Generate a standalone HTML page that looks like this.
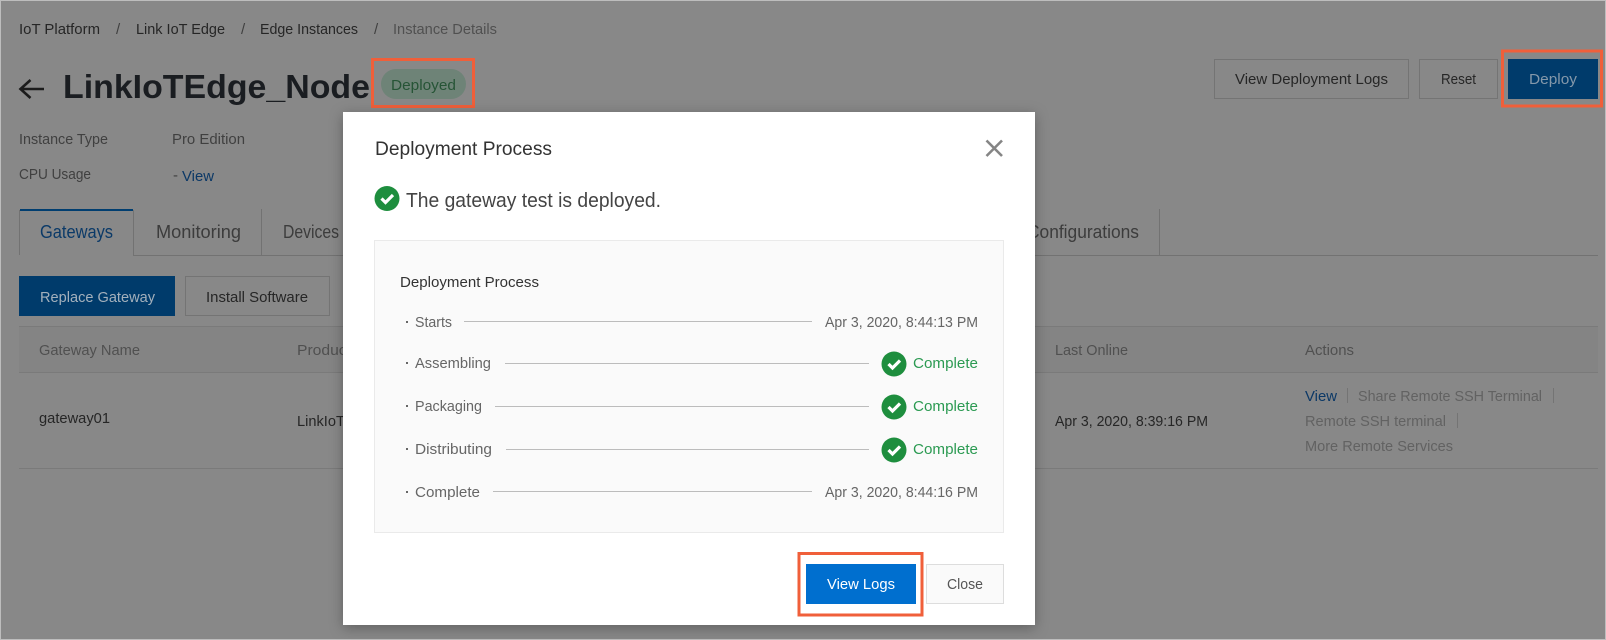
<!DOCTYPE html>
<html><head><meta charset="utf-8"><title>Deployment Process</title>
<style>
html,body{margin:0;padding:0;background:#888;width:1606px;height:640px;overflow:hidden}
svg{display:block}
text{font-family:"Liberation Sans",sans-serif;font-size:15px;white-space:pre}
.d{fill:#262626}.m{fill:#404040}.g{fill:#666}
.h{fill:#505050}.w{fill:#626262}
</style></head><body>
<svg xmlns="http://www.w3.org/2000/svg" width="1606" height="640" viewBox="0 0 1606 640">
<defs><filter id="s" x="-10%" y="-10%" width="120%" height="120%"><feDropShadow dx="0" dy="3" stdDeviation="7" flood-color="#000" flood-opacity=".3"/></filter></defs>
<rect width="1606" height="640" fill="#888"/>
<rect x=".5" y=".5" width="1605" height="639" fill="none" stroke="#bdbdbd"/>
<!-- breadcrumb -->
<text x="19" y="34" class="d" textLength="81" lengthAdjust="spacingAndGlyphs">IoT Platform</text>
<text x="116" y="34" class="m">/</text>
<text x="136" y="34" class="d" textLength="89" lengthAdjust="spacingAndGlyphs">Link IoT Edge</text>
<text x="241" y="34" class="m">/</text>
<text x="260" y="34" class="d" textLength="98" lengthAdjust="spacingAndGlyphs">Edge Instances</text>
<text x="374" y="34" class="m">/</text>
<text x="393" y="34" class="h" textLength="104" lengthAdjust="spacingAndGlyphs">Instance Details</text>
<!-- title -->
<path d="M44 89H21M30.500 80L20.500 89L30.500 98" fill="none" stroke="#1c1c1c" stroke-width="2.600"/>
<text x="63" y="98" style="font-size:33px;font-weight:bold;fill:#1a1d21" textLength="307" lengthAdjust="spacingAndGlyphs">LinkIoTEdge_Node</text>
<rect x="381" y="69" width="85" height="30" rx="15" fill="#6e8377"/>
<text x="391" y="90" style="fill:#265436" textLength="65" lengthAdjust="spacingAndGlyphs">Deployed</text>
<rect x="372.500" y="59.500" width="101" height="47" fill="none" stroke="#f05f3a" stroke-width="3"/>
<!-- meta -->
<text x="19" y="144" class="m" textLength="89" lengthAdjust="spacingAndGlyphs">Instance Type</text>
<text x="172" y="144" class="m" textLength="73" lengthAdjust="spacingAndGlyphs">Pro Edition</text>
<text x="19" y="179" class="m" textLength="72" lengthAdjust="spacingAndGlyphs">CPU Usage</text>
<text x="173" y="180" class="m">-</text>
<text x="182" y="181" style="fill:#0b3866" textLength="32" lengthAdjust="spacingAndGlyphs">View</text>
<!-- tabs -->
<path d="M133 255.500H1598" stroke="#727272" fill="none"/>
<path d="M19.500 255V210M133.500 255V210M261.500 255V209M1159.500 255V209" stroke="#727272" fill="none"/>
<rect x="20" y="209" width="113" height="2" fill="#003e70"/>
<text x="40" y="238" style="font-size:18px;fill:#0b3a68" textLength="73" lengthAdjust="spacingAndGlyphs">Gateways</text>
<text x="156" y="238" style="font-size:18px;fill:#3c3c3c" textLength="85" lengthAdjust="spacingAndGlyphs">Monitoring</text>
<text x="283" y="238" style="font-size:18px;fill:#3c3c3c" textLength="56" lengthAdjust="spacingAndGlyphs">Devices</text>
<text x="1027" y="238" style="font-size:18px;fill:#3c3c3c" textLength="112" lengthAdjust="spacingAndGlyphs">Configurations</text>
<!-- buttons -->
<rect x="19" y="276" width="156" height="40" fill="#003b6b"/>
<text x="40" y="302" style="fill:#a3b0bc" textLength="115" lengthAdjust="spacingAndGlyphs">Replace Gateway</text>
<rect x="185.500" y="276.500" width="144" height="39" fill="none" stroke="#747474"/>
<text x="206" y="302" class="d" textLength="102" lengthAdjust="spacingAndGlyphs">Install Software</text>
<rect x="1214.500" y="59.500" width="194" height="39" fill="none" stroke="#747474"/>
<text x="1235" y="84" class="d" textLength="153" lengthAdjust="spacingAndGlyphs">View Deployment Logs</text>
<rect x="1419.500" y="59.500" width="78" height="39" fill="none" stroke="#747474"/>
<text x="1441" y="84" class="d" textLength="35" lengthAdjust="spacingAndGlyphs">Reset</text>
<rect x="1508" y="59" width="90" height="40" fill="#003b6b"/>
<text x="1529" y="84" style="fill:#8498aa" textLength="48" lengthAdjust="spacingAndGlyphs">Deploy</text>
<rect x="1502.500" y="51" width="99" height="55" fill="none" stroke="#f05f3a" stroke-width="3"/>
<!-- table -->
<rect x="19" y="326" width="1579" height="46" fill="#848484"/>
<path d="M19 326.500H1598M19 372.500H1598M19 468.500H1598" stroke="#7a7a7a" fill="none"/>
<text x="39" y="355" class="h" textLength="101" lengthAdjust="spacingAndGlyphs">Gateway Name</text>
<text x="297" y="355" class="h" textLength="54" lengthAdjust="spacingAndGlyphs">Product</text>
<text x="1055" y="355" class="h" textLength="73" lengthAdjust="spacingAndGlyphs">Last Online</text>
<text x="1305" y="355" class="h" textLength="49" lengthAdjust="spacingAndGlyphs">Actions</text>
<text x="39" y="423" class="d" textLength="71" lengthAdjust="spacingAndGlyphs">gateway01</text>
<text x="297" y="426" class="d" textLength="82" lengthAdjust="spacingAndGlyphs">LinkIoTEdge</text>
<text x="1055" y="426" class="d" textLength="153" lengthAdjust="spacingAndGlyphs">Apr 3, 2020, 8:39:16 PM</text>
<text x="1305" y="401" style="fill:#0b3866" textLength="32" lengthAdjust="spacingAndGlyphs">View</text>
<text x="1358" y="401" class="w" textLength="184" lengthAdjust="spacingAndGlyphs">Share Remote SSH Terminal</text>
<text x="1305" y="426" class="w" textLength="141" lengthAdjust="spacingAndGlyphs">Remote SSH terminal</text>
<text x="1305" y="451" class="w" textLength="148" lengthAdjust="spacingAndGlyphs">More Remote Services</text>
<path d="M1347.500 388V403M1553.500 388V403M1457.500 413V428" stroke="#747474" fill="none"/>
<!-- modal -->
<rect x="343" y="112" width="692" height="513" fill="#fff" filter="url(#s)"/>
<text x="375" y="155" style="font-size:19px;fill:#333" textLength="177" lengthAdjust="spacingAndGlyphs">Deployment Process</text>
<path d="M986.500 140.500L1002 156M1002 140.500L986.500 156" stroke="#858585" stroke-width="2.600" fill="none"/>
<circle cx="387" cy="198.500" r="12.500" fill="#1e8e3e"/>
<path d="M381.500 198.500L385.500 202.500L393 195" stroke="#fff" stroke-width="3.200" fill="none"/>
<text x="406" y="207" style="font-size:20px;fill:#444" textLength="255" lengthAdjust="spacingAndGlyphs">The gateway test is deployed.</text>
<rect x="374.500" y="240.500" width="629" height="292" fill="#fafafa" stroke="#eaeaea"/>
<text x="400" y="287" style="fill:#333;-webkit-text-stroke:.25px #333" textLength="139" lengthAdjust="spacingAndGlyphs">Deployment Process</text>
<g fill="#666">
<rect x="406" y="321" width="2" height="2"/><rect x="406" y="362" width="2" height="2"/><rect x="406" y="405" width="2" height="2"/><rect x="406" y="448" width="2" height="2"/><rect x="406" y="491" width="2" height="2"/>
<text x="415" y="327" textLength="37" lengthAdjust="spacingAndGlyphs">Starts</text>
<text x="415" y="368" textLength="76" lengthAdjust="spacingAndGlyphs">Assembling</text>
<text x="415" y="411" textLength="67" lengthAdjust="spacingAndGlyphs">Packaging</text>
<text x="415" y="454" textLength="77" lengthAdjust="spacingAndGlyphs">Distributing</text>
<text x="415" y="497" textLength="65" lengthAdjust="spacingAndGlyphs">Complete</text>
<text x="825" y="327" textLength="153" lengthAdjust="spacingAndGlyphs">Apr 3, 2020, 8:44:13 PM</text>
<text x="825" y="497" textLength="153" lengthAdjust="spacingAndGlyphs">Apr 3, 2020, 8:44:16 PM</text>
</g>
<path d="M464 321.500H812M505 363.500H869M495 406.500H869M506 449.500H869M493 491.500H812" stroke="#bcbcbc" fill="none"/>
<g>
<circle cx="894" cy="364" r="12.500" fill="#1e8e3e"/><path d="M888.500 364L892.500 368L900 360.500" stroke="#fff" stroke-width="3.200" fill="none"/>
<circle cx="894" cy="407" r="12.500" fill="#1e8e3e"/><path d="M888.500 407L892.500 411L900 403.500" stroke="#fff" stroke-width="3.200" fill="none"/>
<circle cx="894" cy="450" r="12.500" fill="#1e8e3e"/><path d="M888.500 450L892.500 454L900 446.500" stroke="#fff" stroke-width="3.200" fill="none"/>
</g>
<g fill="#2b9a52">
<text x="913" y="368" textLength="65" lengthAdjust="spacingAndGlyphs">Complete</text>
<text x="913" y="411" textLength="65" lengthAdjust="spacingAndGlyphs">Complete</text>
<text x="913" y="454" textLength="65" lengthAdjust="spacingAndGlyphs">Complete</text>
</g>
<rect x="806" y="564" width="110" height="40" fill="#006fcf"/>
<text x="827" y="589" style="fill:#fff;-webkit-text-stroke:.2px #fff" textLength="68" lengthAdjust="spacingAndGlyphs">View Logs</text>
<rect x="799" y="553.500" width="123" height="61.500" fill="none" stroke="#f05f3a" stroke-width="3"/>
<rect x="926.500" y="564.500" width="77" height="39" fill="#fafafa" stroke="#ddd"/>
<text x="947" y="589" style="fill:#555" textLength="36" lengthAdjust="spacingAndGlyphs">Close</text>
</svg>
</body></html>
